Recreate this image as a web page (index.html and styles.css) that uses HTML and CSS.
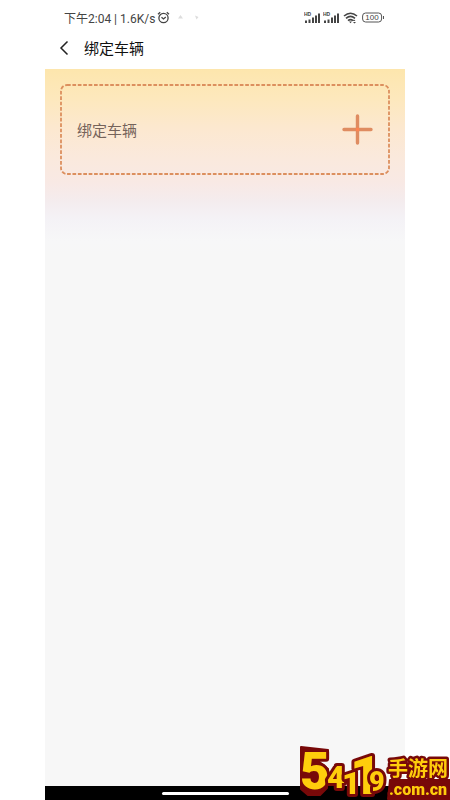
FILE: index.html
```html
<!DOCTYPE html>
<html lang="zh-CN">
<head>
<meta charset="utf-8">
<meta name="viewport" content="width=device-width, initial-scale=1">
<title>绑定车辆</title>
<link rel="stylesheet" href="styles.css">
</head>
<body>
<div class="phone">
  <div class="status">
    <div class="status-left">
      <span>下午2:04 | 1.6K/s</span>
      <svg class="alarm" width="13" height="13" viewBox="0 0 13 13"><circle cx="6.5" cy="7" r="4.6"/><path d="M1 3.2 3.2 1.2M12 3.2 9.8 1.2M4.5 6.2 6.5 8l2.3-2"/></svg>
      <svg class="faint" width="26" height="6" viewBox="0 0 26 6"><path d="M1 4.5 3.5 1 6 4.5zM18 1.500l3.500 1.500-2 2.500z"/></svg>
    </div>
    <div class="status-right">
      <svg width="17" height="13" viewBox="0 0 17 13"><text class="hd" x="0" y="5">HD</text><path d="M1 9.500h2V12H1zM4.500 8.500h2V12h-2zM8 6.500h2V12H8zM11 4.500h2V12h-2zM14 2.500h2V12h-2z"/></svg>
      <svg width="17" height="13" viewBox="0 0 17 13"><text class="hd" x="0" y="5">HD</text><path d="M1 9.500h2V12H1zM4.500 8.500h2V12h-2zM8 6.500h2V12H8zM11 4.500h2V12h-2zM14 2.500h2V12h-2z"/></svg>
      <svg class="wifi" width="15" height="13" viewBox="0 0 15 13"><path d="M1 5Q7.500-.5 14 5M3 7.400Q7.500 3.500 12 7.400M5 9.600Q7.500 7.500 10 9.600"/><path class="solid" d="M6 10.600h3l-1.500 1.600zM11 8.500l1.500 1.500h-3zM11.500 12.500 10 11h3z"/></svg>
      <svg class="battery" width="23" height="11" viewBox="0 0 23 11"><rect x=".6" y="1" width="19" height="9" rx="3"/><path d="M21.500 4v3"/><text x="10" y="8.200">100</text></svg>
    </div>
  </div>
  <header class="title-bar">
    <button class="back" type="button" aria-label="返回"><svg width="10" height="16" viewBox="0 0 10 16"><path d="M8.500 1.500 2 8l6.500 6.500"/></svg></button>
    <h1>绑定车辆</h1>
  </header>
  <main>
    <button class="bind" type="button">
      <svg class="outline"><rect x="1" y="1" rx="6"/></svg>
      <span>绑定车辆</span>
      <svg class="plus" width="31" height="31" viewBox="0 0 31 31"><path d="M2 15.500h27M15.500 2v27"/><path class="center" d="M14 15.500h3"/></svg>
    </button>
  </main>
  <div class="nav"><div class="handle"></div></div>
</div>
<svg class="mark" width="150" height="54" viewBox="0 0 150 54">
  <path class="backing" d="M1 1 28 4V13L17 14 28 23 27 42 20 49H8L1 43zM90 34H150V53H88z"/>
  <g class="digits">
    <text x="0" y="43" font-size="51">5</text>
    <text x="27" y="42" font-size="31">4</text>
    <text x="50" y="48" font-size="54">1</text>
    <text x="42" y="48" font-size="32">1</text>
    <text x="69" y="45" font-size="27">9</text>
  </g>
  <text class="domain" x="89" y="49">.com.cn</text>
  <text class="site" x="88" y="30">手游网</text>
</svg>
</body>
</html>
```
FILE: styles.css
```css
* { box-sizing: border-box; }
body {
  margin: 0;
  background: #fff;
  font-family: "Noto Sans CJK SC", sans-serif;
}
button { border: 0; padding: 0; background: none; font: inherit; }
svg { display: block; }
.phone {
  width: 80%;
  min-height: 100vh;
  margin: 0 auto;
  display: flex;
  flex-direction: column;
}
.status {
  height: 32px;
  padding: 2px 20px 0 19px;
  display: flex;
  align-items: center;
  justify-content: space-between;
  font-family: Roboto, "Noto Sans CJK SC", sans-serif;
  font-size: 12px;
  color: #444;
}
.status-left, .status-right { display: flex; align-items: center; gap: 2px; }
.status-left span { white-space: nowrap; }
.alarm { fill: none; stroke: #444; stroke-width: 1.3; }
.faint { fill: #ddd; margin-left: 5px; }
.status-right { fill: #444; }
.hd { font: bold 5px "Liberation Sans", sans-serif; }
.wifi { fill: none; stroke: #444; stroke-width: 1.6; margin-left: 1px; }
.wifi .solid { fill: #444; stroke: none; }
.battery { fill: none; stroke: #555; margin-left: 2px; }
.battery text {
  fill: #444;
  stroke: none;
  font: 8px "Liberation Sans", sans-serif;
  text-anchor: middle;
}
.title-bar {
  height: 37px;
  padding: 0 14px 5px;
  display: flex;
  align-items: center;
  gap: 15px;
}
.back svg { fill: none; stroke: #222; stroke-width: 1.5; }
h1 { margin: 0; font-size: 15px; font-weight: 400; line-height: 20px; color: #111; }
main {
  flex: 1;
  padding: 15px 15px 0;
  background:
    linear-gradient(#fde6ad 0, #fde8bd 30px, #fce8d0 60px, #fae9dd 90px, #f8e9e5 115px, #f4ecee 132px, #f4f2f6 150px, #f7f7f8 172px, #f7f7f7 185px);
}
.bind {
  position: relative;
  width: 100%;
  height: 91px;
  padding: 0 17px;
  display: flex;
  align-items: center;
  justify-content: space-between;
  font-size: 15px;
  color: #75635a;
}
.outline { position: absolute; inset: 0; width: 100%; height: 100%; }
.outline rect {
  width: calc(100% - 2px);
  height: calc(100% - 2px);
  fill: none;
  stroke: #dc8f5e;
  stroke-width: 1.8;
  stroke-dasharray: 3.7 1.7;
}
.plus { fill: none; stroke: #df8c61; stroke-width: 3.4; stroke-linecap: round; }
.plus .center { stroke: #ff8350; stroke-linecap: butt; }
.nav {
  height: 14px;
  background: #000;
  display: flex;
  align-items: center;
  justify-content: center;
}
.handle { width: 127px; height: 3px; border-radius: 2px; background: #fff; }
.mark {
  position: fixed;
  right: 0;
  bottom: 0;
  fill: #ffcd0c;
  stroke: #780909;
  stroke-width: 6;
  stroke-linejoin: round;
  paint-order: stroke;
}
.backing { fill: #780909; stroke-width: 2; }
.digits { font-family: Roboto, sans-serif; font-weight: 900; }
.site { font-size: 20px; font-weight: 700; stroke-width: 5; }
.domain { font-family: Roboto, sans-serif; font-size: 16px; font-weight: 900; stroke-width: 5; }
```
